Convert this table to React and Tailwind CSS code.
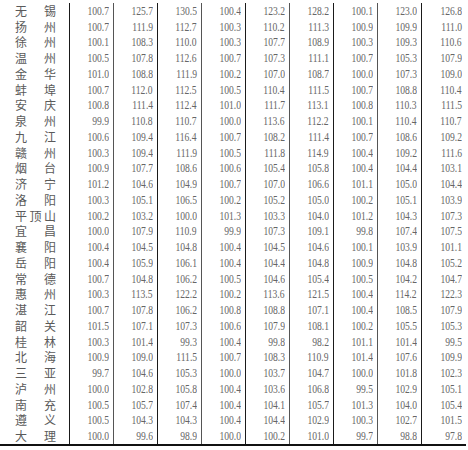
import React from "react";

// 城市 + 9 个指数
const rows = [
  ["无锡", "100.7", "125.7", "130.5", "100.4", "123.2", "128.2", "100.1", "123.0", "126.8"],
  ["扬州", "100.7", "111.9", "112.7", "100.3", "110.2", "111.3", "100.9", "109.9", "111.0"],
  ["徐州", "100.1", "108.3", "110.0", "100.3", "107.7", "108.9", "100.3", "109.3", "110.6"],
  ["温州", "100.5", "107.8", "112.6", "100.7", "107.3", "111.1", "100.7", "105.3", "107.9"],
  ["金华", "101.0", "108.8", "111.9", "100.2", "107.0", "108.7", "100.0", "107.3", "109.0"],
  ["蚌埠", "100.7", "112.0", "112.5", "100.5", "110.4", "111.5", "100.7", "108.8", "110.4"],
  ["安庆", "100.8", "111.4", "112.4", "101.0", "111.7", "113.1", "100.8", "110.3", "111.5"],
  ["泉州", "99.9", "110.8", "110.7", "100.0", "113.6", "112.2", "100.1", "110.4", "110.7"],
  ["九江", "100.6", "109.4", "116.4", "100.7", "108.2", "111.4", "100.7", "108.6", "109.2"],
  ["赣州", "100.3", "109.4", "111.9", "100.5", "111.8", "114.9", "100.4", "109.2", "111.6"],
  ["烟台", "100.9", "107.7", "108.6", "100.6", "105.4", "105.8", "100.4", "104.4", "103.1"],
  ["济宁", "101.2", "104.6", "104.9", "100.7", "107.0", "106.6", "101.1", "105.0", "104.4"],
  ["洛阳", "100.3", "105.1", "106.5", "100.2", "105.2", "105.0", "100.2", "105.1", "103.9"],
  ["平顶山", "100.2", "103.2", "100.0", "101.3", "103.3", "104.0", "101.2", "104.3", "107.3"],
  ["宜昌", "100.0", "107.9", "110.9", "99.9", "107.3", "109.1", "99.8", "107.4", "107.5"],
  ["襄阳", "100.4", "104.5", "104.8", "100.4", "104.5", "104.6", "100.1", "103.9", "101.1"],
  ["岳阳", "100.4", "105.9", "106.1", "100.4", "104.4", "104.8", "100.9", "104.8", "105.2"],
  ["常德", "100.7", "104.8", "106.2", "100.5", "104.6", "105.4", "100.5", "104.2", "104.7"],
  ["惠州", "100.3", "113.5", "122.2", "100.2", "113.6", "121.5", "100.4", "114.2", "122.3"],
  ["湛江", "100.7", "107.8", "106.2", "100.8", "108.8", "107.1", "100.4", "108.5", "107.9"],
  ["韶关", "101.5", "107.1", "107.3", "100.6", "107.9", "108.1", "100.2", "105.5", "105.3"],
  ["桂林", "100.3", "101.4", "99.3", "100.4", "99.8", "98.2", "101.1", "101.4", "99.5"],
  ["北海", "100.9", "109.0", "111.5", "100.7", "108.3", "110.9", "101.4", "107.6", "109.9"],
  ["三亚", "99.7", "104.6", "105.3", "100.0", "103.7", "104.7", "100.0", "101.8", "102.3"],
  ["泸州", "100.0", "102.8", "105.8", "100.4", "103.6", "106.8", "99.5", "102.9", "105.1"],
  ["南充", "100.5", "105.7", "107.4", "100.4", "104.1", "105.7", "101.3", "104.0", "105.4"],
  ["遵义", "100.5", "104.3", "104.3", "100.4", "104.4", "102.9", "100.3", "102.7", "101.5"],
  ["大理", "100.0", "99.6", "98.9", "100.0", "100.2", "101.0", "99.7", "98.8", "97.8"],
];

const cellBorder = [
  "border-r border-[#555]",
  "border-r border-[#1a1a1a]",
  "border-r border-[#555]",
  "border-r border-[#1a1a1a]",
  "border-r border-[#555]",
  "border-r border-[#1a1a1a]",
  "border-r border-[#555]",
  "border-r border-[#1a1a1a]",
  "",
];

const NameCell = ({ name }) => (
  <div className="w-[70px] shrink-0 h-full flex items-center justify-between pl-[15px] pr-[13px] border-r border-[#1a1a1a] text-[12px] text-[#5a5a5a] font-['Noto_Sans_CJK_SC',sans-serif]">
    {name.split("").map((ch, i) => (
      <span key={i} className="leading-none">{ch}</span>
    ))}
  </div>
);

export default function App() {
  return (
    <div className="w-[468px] h-[450px] bg-white overflow-hidden">
      <div className="w-[466px] pt-[3px] border-b-2 border-[#111]">
        {rows.map((r) => (
          <div key={r[0]} className="flex h-[15.75px]">
            <NameCell name={r[0]} />
            {r.slice(1).map((v, i) => (
              <div
                key={i}
                className={`w-[44px] shrink-0 h-full flex items-center justify-end pr-[4px] ${cellBorder[i]}`}
              >
                <span className="inline-block origin-right scale-x-[0.8] text-[12px] leading-none text-[#666] font-['Liberation_Serif',serif]">
                  {v}
                </span>
              </div>
            ))}
          </div>
        ))}
      </div>
    </div>
  );
}
